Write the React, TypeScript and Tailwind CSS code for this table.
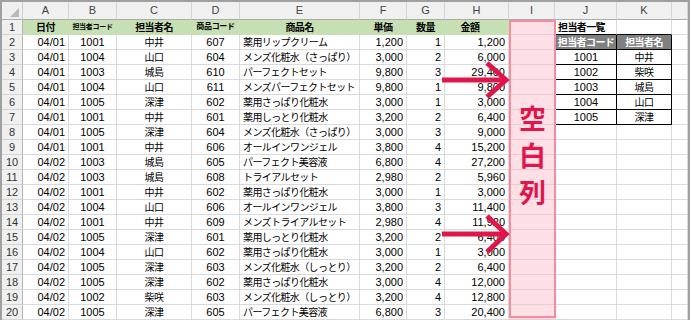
import React from 'react';

const GRID = 'border-[#dadada]';

const rows: string[][] = [
  ['04/01', '1001', '中井', '607', '薬用リップクリーム', '1,200', '1', '1,200'],
  ['04/01', '1004', '山口', '604', 'メンズ化粧水（さっぱり）', '3,000', '2', '6,000'],
  ['04/01', '1003', '城島', '610', 'パーフェクトセット', '9,800', '3', '29,400'],
  ['04/01', '1004', '山口', '611', 'メンズパーフェクトセット', '9,800', '1', '9,800'],
  ['04/01', '1005', '深津', '602', '薬用さっぱり化粧水', '3,000', '1', '3,000'],
  ['04/01', '1001', '中井', '601', '薬用しっとり化粧水', '3,200', '2', '6,400'],
  ['04/01', '1005', '深津', '604', 'メンズ化粧水（さっぱり）', '3,000', '3', '9,000'],
  ['04/01', '1001', '中井', '606', 'オールインワンジェル', '3,800', '4', '15,200'],
  ['04/02', '1003', '城島', '605', 'パーフェクト美容液', '6,800', '4', '27,200'],
  ['04/02', '1003', '城島', '608', 'トライアルセット', '2,980', '2', '5,960'],
  ['04/02', '1001', '中井', '602', '薬用さっぱり化粧水', '3,000', '1', '3,000'],
  ['04/02', '1004', '山口', '606', 'オールインワンジェル', '3,800', '3', '11,400'],
  ['04/02', '1001', '中井', '609', 'メンズトライアルセット', '2,980', '4', '11,920'],
  ['04/02', '1005', '深津', '601', '薬用しっとり化粧水', '3,200', '2', '6,400'],
  ['04/02', '1004', '山口', '602', '薬用さっぱり化粧水', '3,000', '1', '3,000'],
  ['04/02', '1005', '深津', '603', 'メンズ化粧水（しっとり）', '3,200', '2', '6,400'],
  ['04/02', '1005', '深津', '602', '薬用さっぱり化粧水', '3,000', '4', '12,000'],
  ['04/02', '1002', '柴咲', '603', 'メンズ化粧水（しっとり）', '3,200', '4', '12,800'],
  ['04/02', '1005', '深津', '605', 'パーフェクト美容液', '6,800', '3', '20,400'],
];

const staff = [
  ['1001', '中井'],
  ['1002', '柴咲'],
  ['1003', '城島'],
  ['1004', '山口'],
  ['1005', '深津'],
];

const align = ['justify-end', 'justify-center', 'justify-center', 'justify-center', 'justify-start', 'justify-end', 'justify-end', 'justify-end'];

function Cell({ className = '', children }: { className?: string; children?: React.ReactNode }) {
  return (
    <div className={`flex items-center overflow-hidden whitespace-nowrap border-r border-b px-[3px] ${className}`}>
      {children}
    </div>
  );
}

const jp = 'text-[10px] tracking-[-0.6px]';

export default function App() {
  const letters = ['A', 'B', 'C', 'D', 'E', 'F', 'G', 'H', 'I', 'J', 'K', ''];
  return (
    <div className="relative w-[690px] h-[320px] overflow-hidden bg-white border-t-2 border-l-2 border-r-2 border-[#a0a0a0] font-['Liberation_Sans','Noto_Sans_CJK_JP',sans-serif] text-[11px] text-black">
      <div className="grid grid-cols-[21px_46px_48px_75px_48px_120px_47px_38px_64px_46px_62px_55px_1fr] grid-rows-[18px_repeat(20,15px)]">
        {/* column headers */}
        <div className="relative bg-[#f0f0f0] border-r border-b border-r-[#d0d0d0] border-b-[#ababab]">
          <svg className="absolute right-[3px] bottom-[2px]" width="9" height="9" viewBox="0 0 9 9">
            <polygon points="9,0 9,9 0,9" fill="#b9b9b9" />
          </svg>
        </div>
        {letters.map((l, i) => (
          <div
            key={'h' + i}
            className="flex items-center justify-center bg-[#f0f0f0] border-r border-b border-r-[#d5d5d5] border-b-[#ababab] text-[#444] text-[11px]"
          >
            {l}
          </div>
        ))}

        {/* row 1 */}
        <div className="flex items-center justify-center bg-[#f0f0f0] border-r border-b border-r-[#b5b5b5] border-b-[#d5d5d5] text-[#333]">1</div>
        <Cell className="justify-center bg-[#c6e0b4] border-[#c6e0b4] font-bold"><span className={jp}>日付</span></Cell>
        <Cell className="justify-center bg-[#c6e0b4] border-[#c6e0b4] font-bold"><span className="text-[7px] tracking-[-0.3px]">担当者コード</span></Cell>
        <Cell className="justify-center bg-[#c6e0b4] border-[#c6e0b4] font-bold"><span className={jp}>担当者名</span></Cell>
        <Cell className="justify-center bg-[#c6e0b4] border-[#c6e0b4] font-bold"><span className="text-[8px] tracking-[-0.3px]">商品コード</span></Cell>
        <Cell className="justify-center bg-[#c6e0b4] border-[#c6e0b4] font-bold"><span className={jp}>商品名</span></Cell>
        <Cell className="justify-center bg-[#c6e0b4] border-[#c6e0b4] font-bold"><span className={jp}>単価</span></Cell>
        <Cell className="justify-center bg-[#c6e0b4] border-[#c6e0b4] font-bold"><span className={jp}>数量</span></Cell>
        <Cell className="justify-center pr-[16px] bg-[#c6e0b4] border-[#c6e0b4] font-bold"><span className={jp}>金額</span></Cell>
        <Cell className="bg-[#fde0e6] border-[#e9cbd1]" />
        <Cell className="border-r-[#dadada] border-b-black font-bold"><span className={jp}>担当者一覧</span></Cell>
        <Cell className="border-r-[#dadada] border-b-black" />
        <Cell className={GRID} />

        {/* rows 2..20 */}
        {rows.map((r, ri) => {
          const n = ri + 2;
          const t = ri - 1; // staff table index (row 3 -> 0)
          return (
            <React.Fragment key={n}>
              <div className="flex items-center justify-center bg-[#f0f0f0] border-r border-b border-r-[#b5b5b5] border-b-[#d5d5d5] text-[#333]">{n}</div>
              {r.map((v, ci) => (
                <Cell key={ci} className={`${GRID} ${align[ci]}`}>
                  {ci === 2 || ci === 4 ? <span className={jp}>{v}</span> : v}
                </Cell>
              ))}
              <Cell className="bg-[#fde0e6] border-[#e9cbd1]" />
              {n === 2 ? (
                <>
                  <Cell className="justify-center border-l border-black bg-[#808080] text-white font-bold"><span className={jp}>担当者コード</span></Cell>
                  <Cell className="justify-center border-black bg-[#808080] text-white font-bold"><span className={jp}>担当者名</span></Cell>
                </>
              ) : n <= 7 ? (
                <>
                  <Cell className="justify-center border-l border-black">{staff[t][0]}</Cell>
                  <Cell className="justify-center border-black"><span className={jp}>{staff[t][1]}</span></Cell>
                </>
              ) : (
                <>
                  <Cell className={GRID} />
                  <Cell className={GRID} />
                </>
              )}
              <Cell className={GRID} />
            </React.Fragment>
          );
        })}
      </div>

      {/* highlighted empty column */}
      <div className="absolute left-[507px] top-[18px] w-[47px] h-[298px] border-2 border-[#f78ba0]">
        <div className="absolute left-0 right-0 top-[77px] flex flex-col items-center text-[27px] leading-[37px] font-bold text-[#e3154b] font-['Noto_Sans_CJK_JP',sans-serif]">
          <span>空</span>
          <span>白</span>
          <span>列</span>
        </div>
      </div>

      {/* arrows */}
      <svg className="absolute left-0 top-0 pointer-events-none" width="690" height="320" viewBox="0 0 690 320">
        <g stroke="#e0154a" strokeWidth="5" fill="none" strokeLinejoin="miter">
          <line x1="440" y1="78" x2="503" y2="78" />
          <polyline points="485,61 504,78 485,95" />
          <line x1="440" y1="232" x2="503" y2="232" />
          <polyline points="485,214 504,232 485,250" />
        </g>
      </svg>
    </div>
  );
}
